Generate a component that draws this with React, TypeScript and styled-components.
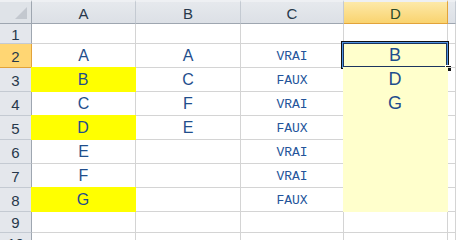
import React from "react"
import styled, { createGlobalStyle, css } from "styled-components"

const GlobalStyle = createGlobalStyle`
    html, body {
        margin: 0;
        padding: 0;
        background: #ffffff;
        overflow: hidden;
    }
`

const GRID = "#d4d4d4"
const HEAD_LINE = "#9ea6b0"

const Sheet = styled.div`
    display: grid;
    grid-template-columns: 32px 104px 105px 103px 104px 1fr;
    grid-template-rows: 24px 20px repeat(7, 24px) 21px 20px;
    width: 456px;
    height: 240px;
    overflow: hidden;
    font-family: "Liberation Sans", Arial, sans-serif;
`

const Corner = styled.div`
    position: relative;
    box-sizing: border-box;
    background: #dfe3e8;
    border-right: 1px solid ${HEAD_LINE};
    border-bottom: 1px solid ${HEAD_LINE};
    border-top: 2px solid #eef0f3;

    &::after {
        content: "";
        position: absolute;
        right: 4px;
        bottom: 4px;
        width: 0;
        height: 0;
        border-left: 12px solid transparent;
        border-bottom: 12px solid #c3c8cf;
    }
`

const ColHeader = styled.div<{ $active?: boolean }>`
    box-sizing: border-box;
    display: flex;
    align-items: center;
    justify-content: center;
    font-size: 15px;
    color: #27384b;
    background: linear-gradient(#e6e9ed, #dce0e6);
    border-top: 2px solid #eef0f3;
    border-right: 1px solid #c4cad2;
    border-bottom: 1px solid ${HEAD_LINE};
    padding-top: 1px;
    ${p => p.$active && css`
        background: linear-gradient(#fde9a8, #f9d36f);
        border-right-color: #e2a33a;
        border-bottom-color: #e2a33a;
        color: #2b4a2b;
    `}
`

const RowHeader = styled.div<{ $active?: boolean }>`
    box-sizing: border-box;
    display: flex;
    align-items: center;
    justify-content: center;
    font-size: 15px;
    color: #27384b;
    background: #e4e7ec;
    border-right: 1px solid ${HEAD_LINE};
    border-bottom: 1px solid #c4cad2;
    padding-top: 1px;
    ${p => p.$active && css`
        background: #ffd673;
        border-right-color: #e2a33a;
        border-bottom-color: #e2a33a;
    `}
`

const Cell = styled.div<{ $fill?: string; $kind?: "text" | "bool" | "big" }>`
    position: relative;
    box-sizing: border-box;
    display: flex;
    align-items: flex-end;
    justify-content: center;
    border-right: 1px solid ${GRID};
    border-bottom: 1px solid ${GRID};
    color: #1f4e8c;
    font-size: 16px;
    line-height: 1;
    padding-bottom: 3px;
    ${p => p.$fill && css`
        background: ${p.$fill};
        border-color: ${p.$fill};
        margin: -1px 0 0 -1px;
    `}
    ${p => p.$kind === "bool" && css`
        font-family: "Liberation Mono", "Courier New", monospace;
        font-size: 13px;
        padding-bottom: 4px;
        color: #23549a;
    `}
    ${p => p.$kind === "big" && css`
        font-size: 18px;
        padding-bottom: 3px;
    `}
`

const Selection = styled.div`
    position: absolute;
    left: -2px;
    top: -2px;
    right: -2px;
    bottom: -2px;
    border: 1px solid #111;
    box-shadow: inset 0 0 0 1px #4f93e3, inset 0 0 0 2px #1d355e;
    pointer-events: none;
`

const FillHandle = styled.div`
    position: absolute;
    right: -4px;
    bottom: -4px;
    width: 5px;
    height: 5px;
    background: #111;
    border: 1px solid #fff;
`

type Row = { n: number; cells: string[]; yellowA?: boolean }

const rows: Row[] = [
    { n: 1, cells: ["", "", "", ""] },
    { n: 2, cells: ["A", "A", "VRAI", "B"] },
    { n: 3, cells: ["B", "C", "FAUX", "D"], yellowA: true },
    { n: 4, cells: ["C", "F", "VRAI", "G"] },
    { n: 5, cells: ["D", "E", "FAUX", ""], yellowA: true },
    { n: 6, cells: ["E", "", "VRAI", ""] },
    { n: 7, cells: ["F", "", "VRAI", ""] },
    { n: 8, cells: ["G", "", "FAUX", ""], yellowA: true },
    { n: 9, cells: ["", "", "", ""] },
    { n: 10, cells: ["", "", "", ""] },
]

const App = () => {
    return (
        <>
            <GlobalStyle />
            <Sheet>
                <Corner />
                <ColHeader>A</ColHeader>
                <ColHeader>B</ColHeader>
                <ColHeader>C</ColHeader>
                <ColHeader $active>D</ColHeader>
                <ColHeader />
                {rows.map(r => {
                    const inD = r.n >= 2 && r.n <= 8
                    return (
                        <React.Fragment key={r.n}>
                            <RowHeader $active={r.n === 2}>{r.n}</RowHeader>
                            <Cell $fill={r.yellowA ? "#ffff00" : undefined}>{r.cells[0]}</Cell>
                            <Cell>{r.cells[1]}</Cell>
                            <Cell $kind="bool">{r.cells[2]}</Cell>
                            <Cell $kind="big" $fill={inD ? "#ffffcc" : undefined}>
                                {r.cells[3]}
                                {r.n === 2 && (
                                    <Selection>
                                        <FillHandle />
                                    </Selection>
                                )}
                            </Cell>
                            <Cell />
                        </React.Fragment>
                    )
                })}
            </Sheet>
        </>
    )
}

export default App
